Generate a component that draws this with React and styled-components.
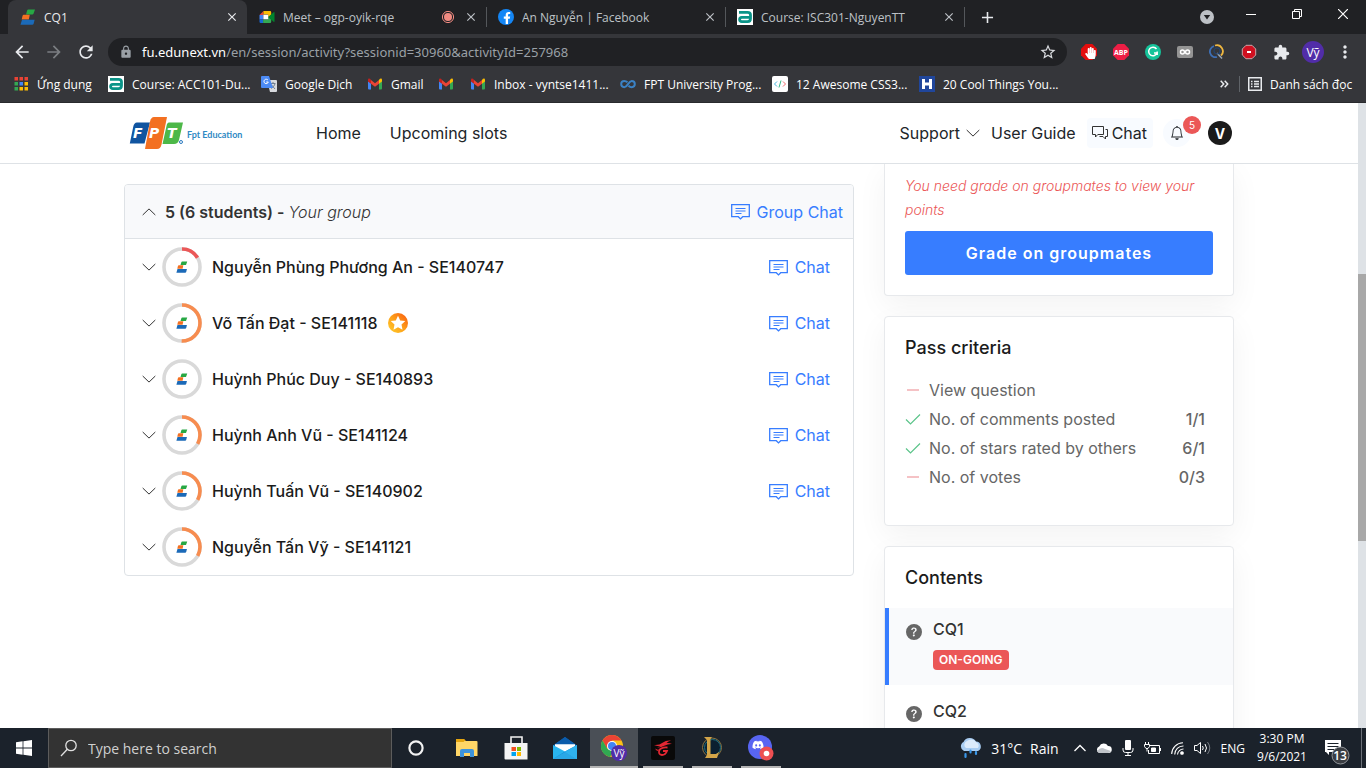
import React from "react";
import styled, { createGlobalStyle } from "styled-components";
import { MdArrowBack, MdArrowForward, MdRefresh, MdLock, MdStarBorder, MdExtension, MdMoreVert, MdClose, MdAdd } from "react-icons/md";
import { BsBell, BsQuestionCircleFill } from "react-icons/bs";
import { FaDiscord, FaFacebookF, FaHandPaper } from "react-icons/fa";

const systemFont = `"Open Sans", "Noto Sans", sans-serif`;
const addressFont = `"Noto Sans", "Open Sans", sans-serif`;
const pageFont = `Inter, "Noto Sans", sans-serif`;

const GlobalStyle = createGlobalStyle`
  * { box-sizing: border-box; }
  body { margin: 0; overflow: hidden; background: #fff; }
  button, input { font: inherit; color: inherit; letter-spacing: inherit; }
  button { border: 0; padding: 0; background: none; cursor: pointer; }
  a { color: inherit; text-decoration: none; }
  svg { display: block; flex: none; }
  h2, p, ul { margin: 0; padding: 0; }
  ul { list-style: none; }
`;

const Desktop = styled.div`
  display: flex;
  flex-direction: column;
  height: 100vh;
  overflow: hidden;
`;

/* ---------- browser chrome ---------- */

const BrowserChrome = styled.header`
  flex: none;
  background: #35363a;
  color: #e8eaed;
  font-family: ${systemFont};
  font-size: 12px;
  border-bottom: 1px solid #292a2d;
`;

const TabStrip = styled.div`
  display: flex;
  height: 34px;
  padding-left: 8px;
  background: #202124;
`;

const Tab = styled.div`
  display: flex;
  align-items: center;
  gap: 8px;
  width: 239px;
  padding: 0 7px 0 12px;
  border-radius: 8px 8px 0 0;
  background: ${(p) => (p.$active ? "#35363a" : "transparent")};
  color: ${(p) => (p.$active ? "#e8eaed" : "#bdc1c6")};
`;

const TabTitle = styled.button`
  flex: 1;
  min-width: 0;
  overflow: hidden;
  text-align: left;
  white-space: nowrap;
`;

const TabRule = styled.span`
  align-self: center;
  width: 1px;
  height: 20px;
  margin-right: -1px;
  background: #54575b;
`;

const IconButton = styled.button`
  display: flex;
  align-items: center;
  justify-content: center;
  width: ${(p) => p.$w || 32}px;
  height: ${(p) => p.$h || 28}px;
  flex: none;
  color: ${(p) => p.$color || "inherit"};
`;

const WindowControls = styled.div`
  display: flex;
  align-items: flex-start;
  margin-left: auto;
  color: #fff;
`;

const Toolbar = styled.div`
  display: flex;
  align-items: center;
  height: 36px;
  padding: 0 5px 0 6px;
`;

const AddressBar = styled.form`
  display: flex;
  align-items: center;
  flex: 1;
  height: 28px;
  margin: 0 6px;
  padding: 0 3px 0 11px;
  border-radius: 14px;
  background: #202124;
  font-family: ${addressFont};
  font-size: 13px;
  color: #9aa0a6;
`;

const Domain = styled.label`
  margin-left: 9px;
  color: #fff;
`;

const AddressInput = styled.input`
  flex: 1;
  min-width: 0;
  padding: 0;
  border: 0;
  outline: 0;
  background: none;
`;

const ProfileButton = styled.button`
  width: 22px;
  height: 22px;
  margin: 0 5px;
  border-radius: 50%;
  background: #512da8;
  color: #fff;
`;

const BookmarkBar = styled.nav`
  display: flex;
  align-items: center;
  height: 32px;
  padding: 0 6px 4px;
`;

const Bookmark = styled.a`
  display: flex;
  align-items: center;
  gap: 8px;
  padding: 0 8px;
  white-space: nowrap;
  color: #fff;
`;

const BookmarkLabel = styled.span`
  width: ${(p) => p.$w}px;
`;

const BookmarkEnd = styled.div`
  display: flex;
  align-items: center;
  margin-left: auto;
`;

const BarRule = styled.span`
  width: 1px;
  height: 16px;
  background: #5f6368;
`;

/* ---------- page ---------- */

const Viewport = styled.div`
  display: flex;
  flex: 1;
  min-height: 0;
  background: #fff;
  color: #212529;
  font-family: ${pageFont};
  font-size: 16px;
`;

const Page = styled.div`
  display: flex;
  flex-direction: column;
  flex: 1;
  min-width: 0;
  overflow: hidden;
`;

const ScrollTrack = styled.div`
  display: flex;
  flex-direction: column;
  width: 8px;
  background: #dee2e6;
`;

const ScrollSpace = styled.span`
  flex: ${(p) => p.$grow};
`;

const ScrollThumb = styled.span`
  flex: 267;
  background: #a8a8a8;
`;

const SiteHeader = styled.header`
  flex: none;
  border-bottom: 1px solid #dee2e6;
  background: #fff;
  z-index: 1;
`;

const Container = styled.div`
  width: 100%;
  max-width: 1110px;
  margin: 0 auto;
`;

const HeaderInner = styled(Container)`
  display: flex;
  align-items: center;
  height: 60px;
  padding: 0 2px 0 5px;
`;

const MainNav = styled.nav`
  display: flex;
  gap: 29px;
  margin-left: 71px;
`;

const UserNav = styled.nav`
  display: flex;
  align-items: center;
  margin-left: auto;
`;

const SupportButton = styled.button`
  display: flex;
  align-items: center;
  gap: 6px;
  margin-right: 11px;
`;

const HeaderChat = styled.a`
  display: flex;
  align-items: center;
  gap: 4px;
  height: 30px;
  margin: 0 10px 0 11px;
  padding: 0 6px 0 5px;
  border-radius: 4px;
  background: #f8fbff;
`;

const BellButton = styled.button`
  position: relative;
  display: grid;
  place-items: center;
  width: 28px;
  height: 28px;
  margin-right: 17px;
  border-radius: 50%;
  background: #f8fbff;
`;

const BellCount = styled.span`
  position: absolute;
  top: -3px;
  right: -10px;
  width: 18px;
  border-radius: 9px;
  background: #eb5757;
  color: #fff;
  font-size: 10px;
  line-height: 18px;
`;

const Avatar = styled.button`
  width: 24px;
  height: 24px;
  border-radius: 50%;
  background: #1b1b1b;
  color: #fff;
  font-size: 14px;
  font-weight: 700;
`;

const Columns = styled(Container)`
  display: flex;
  align-items: flex-start;
  gap: 30px;
`;

const GroupPanel = styled.section`
  flex: 1;
  margin-top: 20px;
  border: 1px solid #dee2e6;
  border-radius: 4px;
  overflow: hidden;
`;

const GroupHead = styled.div`
  display: flex;
  align-items: center;
  height: 54px;
  padding: 0 10px 0 16px;
  border-bottom: 1px solid #dee2e6;
  background: #f8f9fb;
`;

const ToggleButton = styled.button`
  display: grid;
  place-items: center;
  width: 16px;
  height: 24px;
`;

const GroupTitle = styled.h2`
  margin-left: 8px;
  color: #333;
  font-size: 16px;
  font-weight: 600;

  em { font-weight: 300; }
`;

const StudentRow = styled.li`
  display: flex;
  align-items: center;
  height: 56px;
  padding: 0 23px 0 16px;
`;

const Ring = styled.span`
  display: grid;
  place-items: center;
  width: 40px;
  height: 40px;
  margin: 0 10px 0 5px;

  > svg { grid-area: 1 / 1; }
`;

const StudentName = styled.span`
  margin-right: 10px;
  color: #1b1b1b;
  font-weight: 500;
`;

const ChatLink = styled.a`
  display: flex;
  align-items: center;
  gap: 7px;
  margin-left: auto;
  color: #377dff;
`;

const Sidebar = styled.aside`
  display: flex;
  flex-direction: column;
  gap: 20px;
  width: 350px;
  flex: none;
`;

const Card = styled.section`
  padding: ${(p) => p.$pad || "20px"};
  border: 1px solid #e7e9ec;
  border-top-width: ${(p) => (p.$cut ? 0 : 1)}px;
  border-radius: ${(p) => (p.$cut ? "0 0 4px 4px" : "4px")};
  background: #fff;
  box-shadow: 0 10px 30px rgba(0, 0, 0, 0.05);
`;

const CardTitle = styled.h2`
  padding: 0 ${(p) => p.$inset || 0}px;
  color: #1b1b1b;
  font-size: 18px;
  font-weight: 500;
  line-height: 22px;
`;

const Warning = styled.p`
  margin-bottom: 9px;
  color: #eb5757;
  font-size: 14px;
  font-style: italic;
  font-weight: 300;
  line-height: 24px;
`;

const PrimaryButton = styled.button`
  width: 100%;
  height: 44px;
  border-radius: 3px;
  background: #377dff;
  color: #fff;
  font-weight: 600;
  letter-spacing: 1px;
`;

const CriteriaList = styled.ul`
  margin-top: 16px;
`;

const Criterion = styled.li`
  display: flex;
  align-items: center;
  gap: 8px;
  height: 29px;
  padding-right: 8px;
  color: #666;
`;

const Score = styled.span`
  margin-left: auto;
  font-weight: 500;
`;

const ContentItem = styled.a`
  display: flex;
  gap: 11px;
  height: 77px;
  margin-top: ${(p) => (p.$active ? 19 : 5)}px;
  padding: 11px 17px;
  border-left: 4px solid ${(p) => (p.$active ? "#377dff" : "transparent")};
  background: ${(p) => (p.$active ? "#f9fafc" : "#fff")};
  color: #666;

  > svg { margin-top: 5px; }
`;

const ContentText = styled.span`
  display: flex;
  flex-direction: column;
  align-items: flex-start;
  gap: 11px;
  color: #333;
  font-weight: 500;
  line-height: 20px;
`;

const StatusBadge = styled.span`
  padding: 0 6px;
  border-radius: 4px;
  background: #eb5757;
  color: #fff;
  font-size: 12px;
  font-weight: 600;
`;

/* ---------- taskbar ---------- */

const Taskbar = styled.footer`
  display: flex;
  flex: none;
  height: 40px;
  background: #1b222b;
  color: #fff;
  font-family: ${systemFont};
  font-size: 12px;
`;

const TaskSearch = styled.label`
  display: flex;
  align-items: center;
  gap: 10px;
  width: 344px;
  padding: 0 11px;
  border: 1px solid #5c5c5c;
  background: #333;
`;

const TaskSearchInput = styled.input`
  flex: 1;
  min-width: 0;
  padding: 0;
  border: 0;
  outline: 0;
  background: none;
  font-size: 14px;

  &::placeholder { color: #d0d0d0; opacity: 1; }
`;

const TaskApps = styled.div`
  display: flex;
  gap: 1px;
  margin-left: 3px;
`;

const TaskButton = styled.button`
  display: grid;
  place-items: center;
  width: 48px;
  height: 40px;
  background: ${(p) => (p.$active ? "#4a4f56" : "none")};
`;

const RunningButton = styled(TaskButton)`
  background-image: linear-gradient(#b4b4b4, #b4b4b4);
  background-repeat: no-repeat;
  background-position: bottom;
  background-size: ${(p) => (p.$active ? 48 : 40)}px 2px;
`;

const Tray = styled.div`
  display: flex;
  align-items: center;
  gap: 10px;
  margin-left: auto;
  padding-right: 4px;
`;

const Weather = styled.button`
  display: flex;
  align-items: center;
  gap: 8px;
  margin-right: 5px;
  font-size: 14px;
`;

const Clock = styled.time`
  display: flex;
  flex-direction: column;
  width: 54px;
  line-height: 18px;
  text-align: center;
`;

const Notifications = styled.button`
  width: 27px;
  height: 40px;
  margin-left: 5px;
`;

const ShowDesktop = styled.span`
  width: 1px;
  height: 40px;
  background: #6b7078;
`;

/* ---------- drawings ---------- */

const EduLogo = ({ size = 16 }) => (
  <svg width={size} height={size} viewBox="0 0 16 16">
    <path fill="#27a844" d="M8.400 .5H15l-1.400 4q-.3.9-1.400.9H6l1-3.500Q7.300.5 8.400.5z" />
    <path fill="#f37021" d="M3.800 5.800h6L8.800 10.400H1.700l.8-3.400q.3-1.200 1.300-1.200z" />
    <path fill="#1b6ab8" d="M2 10.800h12.600l-1 3.900q-.3 1.100-1.400 1.100H.5z" />
  </svg>
);

const MeetIcon = () => (
  <svg width="16" height="16" viewBox="0 0 16 16">
    <path fill="#ea4335" d="M4.500 2v4H.5z" />
    <path fill="#fbbc04" d="M4.500 2H11q1.200 0 1.200 1.200V6l-3 2V5.500H4.500z" />
    <path fill="#4285f4" d="M.5 6h3.600v4.500H.5z" />
    <path fill="#1967d2" d="M.5 10.500h3.600V14H1.700Q.5 14 .5 12.800z" />
    <path fill="#34a853" d="M4.100 10.500h5V8l3.100 2.500v2.300Q12.200 14 11 14H4.100z" />
    <path fill="#00832d" d="M9.100 8 14.600 3.300q.9-.5.900.4v8.600q0 .9-.9.4z" />
    <path fill="#fff" d="M4.300 5.700h4.900v4.600H4.300z" />
  </svg>
);

const FacebookIcon = () => (
  <svg width="16" height="16" viewBox="0 0 16 16">
    <circle cx="8" cy="8" r="8" fill="#1486f5" />
    <FaFacebookF x="3" y="3" width="10" height="13" color="#fff" />
  </svg>
);

const CourseIcon = () => (
  <svg width="16" height="16" viewBox="0 0 16 16">
    <path fill="#fff" d="M0 0h16v16H0z" />
    <path fill="none" stroke="#0b9488" strokeWidth="2.800" d="M2 3.400h8.500Q13.500 3.400 13.500 6v3.500Q13.500 12.600 10.500 12.600H4.800Q2.600 12.600 2.600 10.500T4.800 8.300h8" />
  </svg>
);

const RecordIcon = () => (
  <svg width="14" height="14" viewBox="0 0 14 14">
    <circle cx="7" cy="7" r="4" fill="#f28b82" />
    <circle cx="7" cy="7" r="5.600" fill="none" stroke="#f28b82" />
  </svg>
);

const AppsIcon = () => {
  const colors = ["#ea4335", "#ea4335", "#ea4335", "#34a853", "#4285f4", "#fbbc04", "#34a853", "#fbbc04", "#fbbc04"];
  return (
    <svg width="15" height="14" viewBox="0 0 14 14">
      {colors.map((c, i) => <rect key={i} x={(i % 3) * 5} y={Math.floor(i / 3) * 5} width="3.500" height="3.500" fill={c} />)}
    </svg>
  );
};

const TranslateIcon = () => (
  <svg width="16" height="16" viewBox="0 0 16 16">
    <path fill="#d7dade" d="M6 4h9q1 0 1 1v10q0 1-1 1H9z" />
    <path fill="none" stroke="#6f7f90" d="M9.500 7.500h5M12 6v1.500M14 8q-1 3-4 4.500M10.500 9l3.500 4" />
    <path fill="#4c8bf5" d="M1 0h7l4 12H1q-1 0-1-1V1q0-1 1-1z" />
    <path fill="none" stroke="#fff" d="M7 4.200A2.200 2.200 0 1 0 7.300 6H5.200" />
  </svg>
);

const GmailIcon = () => (
  <svg width="16" height="16" viewBox="0 0 16 16">
    <path fill="#4285f4" d="M1 5l3 2.200V13.500H2q-1 0-1-1z" />
    <path fill="#34a853" d="M15 5l-3 2.200v6.300h2q1 0 1-1z" />
    <path fill="#ea4335" d="M4 4l4 3.300L12 4v3.700l-4 3.100-4-3.100z" />
    <path fill="#c5221f" d="M1 4q0-2 2-1.200L4 3.700v4L1 5.600z" />
    <path fill="#fbbc04" d="M15 4q0-2-2-1.200l-1 .9v4l3-2.100z" />
  </svg>
);

const InfinityIcon = () => (
  <svg width="16" height="16" viewBox="0 0 16 16">
    <path fill="none" stroke="#3b82c4" strokeWidth="2" d="M7.500 6.300Q6 5 4.300 5a3 3 0 0 0 0 6.200Q6 11.200 8 8.100T11.700 5a3 3 0 0 1 0 6.200q-1.700 0-3.200-1.500" />
  </svg>
);

const CodeIcon = () => (
  <svg width="16" height="16" viewBox="0 0 16 16" fill="none">
    <rect width="16" height="16" rx="2" fill="#fff" />
    <path stroke="#45b6e0" d="M5 5.500 2.500 8 5 10.500" />
    <path stroke="#37b889" d="M9 4.500 7 11.500" />
    <path stroke="#f06a6a" d="M11 5.500 13.500 8 11 10.500" />
  </svg>
);

const HIcon = () => (
  <svg width="16" height="16" viewBox="0 0 16 16">
    <path fill="#20469b" d="M0 0h16v16H0z" />
    <path stroke="#fff" strokeWidth="3" d="M4.500 3v10M11.500 3v10M4.500 8h7" />
  </svg>
);

const ReadingListIcon = () => (
  <svg width="14" height="14" viewBox="0 0 14 14" fill="none" stroke="#e8eaed">
    <path strokeWidth="1.500" d="M.75.75h12.500v12.500H.75z" />
    <path d="M3 4.500h1.500M6 4.500h5M3 7h1.500M6 7h5M3 9.500h1.500M6 9.500h5" strokeWidth="1.500" />
  </svg>
);

const Octagon = ({ fill, children }) => (
  <svg width="16" height="16" viewBox="0 0 16 16">
    <path fill={fill} d="M4.700 0h6.600L16 4.700v6.600L11.300 16H4.700L0 11.300V4.700z" />
    {children}
  </svg>
);

const GrammarIcon = () => (
  <svg width="16" height="16" viewBox="0 0 16 16">
    <circle cx="8" cy="8" r="8" fill="#15c39a" />
    <path fill="none" stroke="#fff" strokeWidth="1.500" d="M11.500 5A4.300 4.300 0 1 0 12 9H9M12.200 7.500V11" />
  </svg>
);

const LinkBoxIcon = () => (
  <svg width="16" height="16" viewBox="0 0 16 16">
    <rect y="2" width="16" height="12" rx="2" fill="#949494" />
    <path fill="none" stroke="#fff" strokeWidth="1.500" d="M8 8Q6.800 6 5.500 6a2 2 0 0 0 0 4Q6.800 10 8 8t2.500-2a2 2 0 0 1 0 4Q9.200 10 8 8z" />
  </svg>
);

const SearchRingIcon = () => (
  <svg width="16" height="16" viewBox="0 0 16 16" fill="none" strokeWidth="1.800">
    <path stroke="#3d6fb5" d="M5 2.200A5.500 5.500 0 0 0 8 13" />
    <path stroke="#f0b840" d="M6 1.500A6 6 0 0 1 12 11.500" />
    <path stroke="#9aa7b5" strokeWidth="1.500" d="M8 9l5 5.500" />
    <circle cx="8" cy="7" r="3" stroke="#23446f" strokeWidth="1.200" />
  </svg>
);

const RedDotIcon = () => (
  <svg width="16" height="16" viewBox="0 0 16 16">
    <path fill="#cf1020" stroke="#c9a6a9" d="M5 1.300h6L14.700 5v6L11 14.700H5L1.300 11V5z" />
    <rect x="6" y="7" width="4" height="2" fill="#fff" />
  </svg>
);

const FptLogo = () => (
  <svg width="116" height="36" viewBox="0 0 116 36" role="img" aria-label="FPT Education">
    <path fill="#1054a0" d="M8 7.500h13L15.500 28.500H.8L4.200 12Q5 7.500 8 7.500z" />
    <path fill="#f37021" d="M25 2h13l-5.500 27.500Q31.500 34 28 34H16l5-27.500Q22 2 25 2z" />
    <path fill="#4db848" d="M40 7.500h14L50 25Q49 29 45 29H33.500l4-18Q38 7.500 40 7.500z" />
    <g fill="#fff" fontFamily={`"DejaVu Sans", sans-serif`} fontSize="14" fontWeight="700" fontStyle="italic">
      <text x="4" y="23">F</text>
      <text x="20" y="23">P</text>
      <text x="38" y="23">T</text>
    </g>
    <circle cx="52" cy="27" r="1.500" fill="none" stroke="#2b7ac0" />
    <text x="58" y="23" fill="#2f8ac4" fontFamily="Lato, sans-serif" fontSize="9" fontWeight="700">Fpt Education</text>
  </svg>
);

const Chevron = ({ up }) => (
  <svg width="14" height="8" viewBox="0 0 14 8">
    <path fill="none" stroke="#333" d={up ? "M.7 7 7 .9 13.300 7" : "M.7 1 7 7.100 13.300 1"} />
  </svg>
);

const HeaderChatIcon = () => (
  <svg width="16" height="16" viewBox="0 0 16 16" fill="none" stroke="#333">
    <path d="M.5 1.500h11v8H5.800L3.500 12V9.500h-3zM13.500 4.500h2v7h-2V14l-2.500-2.500H7.500" />
  </svg>
);

const ChatIcon = () => (
  <svg width="19" height="17" viewBox="0 0 19 17" fill="none" stroke="#377dff">
    <path strokeWidth="1.300" d="M.7 1.700h17.600v12h-6.600l-2.200 2.200-2.200-2.200H.7z" />
    <path d="M4.500 5.500h10M4.500 8h10M4.500 10.500h6" />
  </svg>
);

const StarMedal = () => (
  <svg width="20" height="20" viewBox="0 0 20 20">
    <defs>
      <linearGradient id="medal" x1="0" y1="1" x2="1" y2="0">
        <stop offset="0" stopColor="#ffd02c" />
        <stop offset=".5" stopColor="#fd9f1a" />
        <stop offset="1" stopColor="#f9560e" />
      </linearGradient>
    </defs>
    <circle cx="10" cy="10" r="10" fill="url(#medal)" />
    <path fill="#fff" d="m10 2.800 2.200 4.700 5.100.6-3.800 3.500 1 5.100-4.500-2.500-4.500 2.500 1-5.100L2.700 8.100l5.100-.6z" />
  </svg>
);

const ProgressRing = ({ value, color }) => {
  const length = 2 * Math.PI * 18;
  return (
    <Ring>
      <svg width="40" height="40" viewBox="0 0 40 40" fill="none" strokeWidth="3.600">
        <circle cx="20" cy="20" r="18" stroke="#d9d9d9" />
        {value > 0 && (
          <circle cx="20" cy="20" r="18" stroke={color} strokeDasharray={`${length * value} ${length}`} transform="rotate(-90 20 20)" />
        )}
      </svg>
      <EduLogo size={12} />
    </Ring>
  );
};

const DashIcon = () => (
  <svg width="16" height="16" viewBox="0 0 16 16"><path stroke="#f5c2c5" strokeWidth="2" d="M2 8h12" /></svg>
);

const TickIcon = () => (
  <svg width="16" height="16" viewBox="0 0 16 16"><path fill="none" stroke="#5cc48a" strokeWidth="1.200" d="m1 8.500 4.500 4.500L15 3.500" /></svg>
);

const WindowsIcon = () => (
  <svg width="16" height="16" viewBox="0 0 16 16" fill="#fff">
    <path d="M0 2.200 6.600 1.300v6.300H0zM7.400 1.200 16 0v7.600H7.400zM0 8.400h6.600v6.300L0 13.800zM7.400 8.400H16V16l-8.600-1.200z" />
  </svg>
);

const MagnifierIcon = () => (
  <svg width="18" height="18" viewBox="0 0 18 18" fill="none" stroke="#e0e0e0" strokeWidth="1.300">
    <circle cx="11" cy="6.500" r="5.200" /><path d="M7.300 10.300 1 17" />
  </svg>
);

const CortanaIcon = () => (
  <svg width="18" height="18" viewBox="0 0 18 18"><circle cx="9" cy="9" r="6.600" fill="none" stroke="#f2f2f2" strokeWidth="2.200" /></svg>
);

const FolderIcon = () => (
  <svg width="22" height="20" viewBox="0 0 22 20">
    <path fill="#e5a50f" d="M0 1h8l2 2v4H0z" />
    <path fill="#ffd667" d="M1 3h19.500q1 0 1 1v14H0V4z" />
    <path fill="#e5a50f" d="M0 1h8l1 1.500L7.500 4H0z" />
    <path fill="#3d93db" d="M4 19v-6q0-2 2-2h10q2 0 2 2v6h-4v-4H8v4z" />
  </svg>
);

const StoreIcon = () => (
  <svg width="24" height="24" viewBox="0 0 24 24">
    <path fill="none" stroke="#f2f2f2" strokeWidth="1.600" d="M7 7V1h11v6" />
    <path fill="#f4f4f4" d="M.5 7h23v16.500H1.500q-1 0-1-1z" />
    <path fill="#f25022" d="M7.500 11H12v4H7.500z" /><path fill="#7fba00" d="M13 11h4v4h-4z" />
    <path fill="#00a4ef" d="M7.500 16H12v4H7.500z" /><path fill="#ffb900" d="M13 16h4v4h-4z" />
  </svg>
);

const MailIcon = () => (
  <svg width="24" height="22" viewBox="0 0 24 22">
    <path fill="#0b5cab" d="M0 8.500 12 0l12 8.500V13H0z" />
    <path fill="#fff" d="M2 7h20v5l-10 6L2 12z" />
    <path fill="#0b5cab" d="M0 8.500 12 0l12 8.500-2-1.300H2z" />
    <path fill="#29b5ef" d="M0 8 12 14.500 24 8v14H0z" />
    <path fill="#1386d6" d="M0 22h24L12 14.500z" />
    <path fill="#1f9de6" d="M24 8v14L12 14.500z" />
    <path fill="#40c8f5" d="M0 22 24 8v14z" opacity=".5" />
  </svg>
);

const ChromeIcon = () => (
  <svg width="26" height="26" viewBox="0 0 26 26">
    <circle cx="11" cy="11" r="11" fill="#fbc116" />
    <path fill="#ea4335" d="M1.500 5.500a11 11 0 0 1 19 0H11l-5 8z" />
    <path fill="#30a852" d="M1.500 5.500 6.300 13.700 12 16l-3 6A11 11 0 0 1 1.500 5.500z" />
    <circle cx="11" cy="11" r="5" fill="#fff" /><circle cx="11" cy="11" r="4" fill="#4285f4" />
    <circle cx="18" cy="18" r="8" fill="#512da8" />
    <text x="18" y="22" textAnchor="middle" fill="#fff" fontSize="10">Vỹ</text>
  </svg>
);

const GarenaIcon = () => (
  <svg width="24" height="24" viewBox="0 0 24 24">
    <rect width="24" height="24" rx="2" fill="#090909" />
    <path fill="#e32733" d="M3 9q5 .5 9-2.500Q15 4 20 4.500 17 5 15.500 7 18 6.500 21 8q-4-.3-7 1.500-5 2.500-8 2Q8 11 9.500 10 6 10.500 3 9z" />
    <path fill="none" stroke="#e32733" strokeWidth="1.800" d="M16.500 11.500Q10 11 8.200 14.500 7 18.500 11 19q3.500 0 5-4h-4" />
    <path fill="#e32733" d="M4 12.500q2 1.500 4 1l-1 1.500q-2-.2-3-2.500z" />
  </svg>
);

const LeagueIcon = () => (
  <svg width="24" height="24" viewBox="0 0 24 24">
    <circle cx="12" cy="11.500" r="9.500" fill="#0b1f30" stroke="#8d7440" strokeWidth="1" />
    <circle cx="12.500" cy="11.500" r="8" fill="none" stroke="#1d6f80" strokeWidth="1" />
    <path fill="#d3a549" d="M4 1h8l-1.500 2v15H16l3-2-2 6H5l2-3V4z" />
  </svg>
);

const DiscordIcon = () => (
  <svg width="26" height="26" viewBox="0 0 26 26">
    <circle cx="12" cy="12" r="12" fill="#5865f2" />
    <FaDiscord x="4" y="4" width="16" height="16" color="#fff" />
    <circle cx="18.500" cy="18.500" r="7" fill="#ed4f52" /><circle cx="18.500" cy="18.500" r="2.800" fill="#fff" />
  </svg>
);

const RainIcon = () => (
  <svg width="24" height="22" viewBox="0 0 24 22">
    <path fill="#a9cdf2" d="M5 14a5 5 0 0 1-.5-9A7 7 0 0 1 17 4.500a5 5 0 0 1 2 9.500z" />
    <path fill="#dcebfb" d="M7 11a4 4 0 0 1 1-7 6 6 0 0 1 9 1 4 4 0 0 1 2 6z" />
    <path stroke="#3a97e8" strokeWidth="2.200" strokeLinecap="round" d="M6.500 17v3M11.500 13.500v2M17 15v2" />
  </svg>
);

const CloudIcon = () => (
  <svg width="16" height="12" viewBox="0 0 16 12">
    <path fill="#fff" d="M3.500 11a3.400 3.400 0 0 1-.3-6.500A5 5 0 0 1 12 4a3.500 3.500 0 0 1 .5 7z" />
    <path fill="#bfc3c8" d="M1 9q4-5 8-2l6 2q-1 2-3 2H3.500Q2 11 1 9z" />
  </svg>
);

const MicIcon = () => (
  <svg width="12" height="16" viewBox="0 0 12 16">
    <rect x="3" y="0" width="6" height="10" rx="1" fill="#fff" />
    <path fill="none" stroke="#fff" d="M1 8v2q0 2.500 2.500 2.500h5Q11 12.500 11 10V8M6 12.500v3M3 15.500h6" />
  </svg>
);

const BatteryIcon = () => (
  <svg width="17" height="13" viewBox="0 0 17 13" fill="none" stroke="#fff">
    <path d="M6 3.500h9.500v8h-11V8M16.500 6v3M1.500 0v2M4.500 0v2M.5 2.500h5v2l-1.500 2H2L.5 4.500zM3 6.500v3" />
    <path fill="#fff" d="M7.500 6h4v3.500h-4z" />
  </svg>
);

const WifiIcon = () => (
  <svg width="13" height="13" viewBox="0 0 13 13" fill="none" stroke="#fff" strokeWidth="1.100">
    <path d="M.7 12A11.500 11.500 0 0 1 12 .7M3.700 12.500A8.500 8.500 0 0 1 12.500 4M6.500 12.500a6 6 0 0 1 6-5.500" /><circle cx="11" cy="11" r="1.300" fill="#fff" />
  </svg>
);

const SpeakerIcon = () => (
  <svg width="17" height="14" viewBox="0 0 17 14" fill="none" stroke="#fff">
    <path d="M.5 4.500h2.500l3.500-3v11L3 9.500H.5zM8.500 5q1.500 2 0 4" />
    <path d="M11 3q3 4 0 8" /><path stroke="#777c84" d="M13.500 1q4.500 6 0 12" />
  </svg>
);

const NoticeIcon = () => (
  <svg width="27" height="40" viewBox="0 0 27 40">
    <path fill="#fff" d="M1 12h16v12H5v3l-3-3H1z" />
    <path stroke="#1b222b" d="M3.500 15.500h11M3.500 18.500h11M3.500 21.500h7" />
    <circle cx="16.500" cy="27.500" r="8.500" fill="#3a3d42" stroke="#91959a" />
    <text x="16" y="32" textAnchor="middle" fill="#fff" fontSize="12" fontWeight="600">13</text>
  </svg>
);

/* ---------- data ---------- */

const tabs = [
  { title: "CQ1", icon: <EduLogo />, active: true },
  { title: "Meet – ogp-oyik-rqe", icon: <MeetIcon />, recording: true },
  { title: "An Nguyễn | Facebook", icon: <FacebookIcon /> },
  { title: "Course: ISC301-NguyenTT", icon: <CourseIcon /> },
];

const bookmarks = [
  { label: "Ứng dụng", icon: <AppsIcon />, width: 55 },
  { label: "Course: ACC101-Du...", icon: <CourseIcon />, width: 113 },
  { label: "Google Dịch", icon: <TranslateIcon />, width: 66 },
  { label: "Gmail", icon: <GmailIcon />, width: 31 },
  { icon: <GmailIcon /> },
  { label: "Inbox - vyntse1411...", icon: <GmailIcon />, width: 110 },
  { label: "FPT University Prog...", icon: <InfinityIcon />, width: 112 },
  { label: "12 Awesome CSS3...", icon: <CodeIcon />, width: 107 },
  { label: "20 Cool Things You...", icon: <HIcon />, width: 111 },
];

const students = [
  { name: "Nguyễn Phùng Phương An - SE140747", value: 0.163, color: "#eb5757", chat: true },
  { name: "Võ Tấn Đạt - SE141118", value: 0.5, color: "#f78c4f", chat: true, star: true },
  { name: "Huỳnh Phúc Duy - SE140893", value: 0, chat: true },
  { name: "Huỳnh Anh Vũ - SE141124", value: 0.33, color: "#f78c4f", chat: true },
  { name: "Huỳnh Tuấn Vũ - SE140902", value: 0.33, color: "#f78c4f", chat: true },
  { name: "Nguyễn Tấn Vỹ - SE141121", value: 0.33, color: "#f78c4f" },
];

const criteria = [
  { label: "View question" },
  { label: "No. of comments posted", score: "1/1", done: true },
  { label: "No. of stars rated by others", score: "6/1", done: true },
  { label: "No. of votes", score: "0/3" },
];

export default function App() {
  return (
    <Desktop>
      <GlobalStyle />
      <BrowserChrome>
        <TabStrip>
          {tabs.map((tab, i) => (
            <React.Fragment key={tab.title}>
              <Tab $active={tab.active}>
                {tab.icon}
                <TabTitle>{tab.title}</TabTitle>
                {tab.recording && <RecordIcon />}
                <IconButton $w={16} $h={16} aria-label="Close tab"><MdClose size={14} /></IconButton>
              </Tab>
              {i > 0 && <TabRule />}
            </React.Fragment>
          ))}
          <IconButton $w={46} $h={34} aria-label="New tab"><MdAdd size={19} /></IconButton>
          <WindowControls>
            <IconButton $w={42} $h={34} aria-label="Tab search">
              <svg width="14" height="14" viewBox="0 0 14 14"><circle cx="7" cy="7" r="7" fill="#bdc1c6" /><path fill="#202124" d="M3.800 5h6.400L7 9.500z" /></svg>
            </IconButton>
            <IconButton $w={46} aria-label="Minimize">
              <svg width="10" height="10" viewBox="0 0 10 10"><path stroke="#fff" d="M0 5.500h10" /></svg>
            </IconButton>
            <IconButton $w={46} aria-label="Restore">
              <svg width="10" height="10" viewBox="0 0 10 10" fill="none" stroke="#fff"><path d="M.5 2.500h7v7h-7zM2.500 2.500v-2h7v7h-2" /></svg>
            </IconButton>
            <IconButton $w={46} aria-label="Close">
              <svg width="10" height="10" viewBox="0 0 10 10"><path stroke="#fff" strokeWidth="1.200" d="M0 0l10 10M10 0 0 10" /></svg>
            </IconButton>
          </WindowControls>
        </TabStrip>

        <Toolbar>
          <IconButton aria-label="Back"><MdArrowBack size={20} /></IconButton>
          <IconButton aria-label="Forward" $color="#7b7e82"><MdArrowForward size={20} /></IconButton>
          <IconButton aria-label="Reload"><MdRefresh size={20} /></IconButton>
          <AddressBar>
            <MdLock size={14} />
            <Domain htmlFor="address">fu.edunext.vn</Domain>
            <AddressInput id="address" defaultValue="/en/session/activity?sessionid=30960&activityId=257968" />
            <IconButton type="button" aria-label="Bookmark this page" $color="#dadce0"><MdStarBorder size={18} /></IconButton>
          </AddressBar>
          <IconButton aria-label="Content blocker">
            <Octagon fill="#e40d0d"><FaHandPaper x="3.500" y="3" width="9" height="10" color="#fff" /></Octagon>
          </IconButton>
          <IconButton aria-label="Adblock Plus">
            <Octagon fill="#ed1e45"><text x="8" y="11" textAnchor="middle" fill="#fff" fontSize="7" fontWeight="700">ABP</text></Octagon>
          </IconButton>
          <IconButton aria-label="Grammar checker"><GrammarIcon /></IconButton>
          <IconButton aria-label="Link tool"><LinkBoxIcon /></IconButton>
          <IconButton aria-label="Search tool"><SearchRingIcon /></IconButton>
          <IconButton aria-label="Recorder"><RedDotIcon /></IconButton>
          <IconButton aria-label="Extensions"><MdExtension size={17} /></IconButton>
          <ProfileButton>Vỹ</ProfileButton>
          <IconButton aria-label="Menu"><MdMoreVert size={20} /></IconButton>
        </Toolbar>

        <BookmarkBar>
          {bookmarks.map((b, i) => (
            <Bookmark key={i} href="#" aria-label={b.label || "Gmail inbox"}>
              {b.icon}
              {b.label && <BookmarkLabel $w={b.width}>{b.label}</BookmarkLabel>}
            </Bookmark>
          ))}
          <BookmarkEnd>
            <IconButton $w={30} aria-label="More bookmarks">
              <svg width="9" height="8" viewBox="0 0 9 8" fill="none" stroke="#e8eaed" strokeWidth="1.500"><path d="m.7.700 3 3.300-3 3.300M4.700.700l3 3.300-3 3.300" /></svg>
            </IconButton>
            <BarRule />
            <Bookmark as="button"><ReadingListIcon /><BookmarkLabel $w={82}>Danh sách đọc</BookmarkLabel></Bookmark>
          </BookmarkEnd>
        </BookmarkBar>
      </BrowserChrome>

      <Viewport>
        <Page>
          <SiteHeader>
            <HeaderInner>
              <a href="#"><FptLogo /></a>
              <MainNav>
                <a href="#">Home</a>
                <a href="#">Upcoming slots</a>
              </MainNav>
              <UserNav>
                <SupportButton>Support <Chevron /></SupportButton>
                <a href="#">User Guide</a>
                <HeaderChat href="#"><HeaderChatIcon />Chat</HeaderChat>
                <BellButton aria-label="Notifications"><BsBell size={14} /><BellCount>5</BellCount></BellButton>
                <Avatar>V</Avatar>
              </UserNav>
            </HeaderInner>
          </SiteHeader>

          <Columns as="main">
            <GroupPanel>
              <GroupHead>
                <ToggleButton aria-label="Collapse group"><Chevron up /></ToggleButton>
                <GroupTitle>5 (6 students) - <em>Your group</em></GroupTitle>
                <ChatLink href="#"><ChatIcon />Group Chat</ChatLink>
              </GroupHead>
              <ul>
                {students.map((s) => (
                  <StudentRow key={s.name}>
                    <ToggleButton aria-label="Expand student"><Chevron /></ToggleButton>
                    <ProgressRing value={s.value} color={s.color} />
                    <StudentName>{s.name}</StudentName>
                    {s.star && <StarMedal />}
                    {s.chat && <ChatLink href="#"><ChatIcon />Chat</ChatLink>}
                  </StudentRow>
                ))}
              </ul>
            </GroupPanel>

            <Sidebar>
              <Card $cut $pad="10px 20px 20px">
                <Warning>You need grade on groupmates to view your points</Warning>
                <PrimaryButton>Grade on groupmates</PrimaryButton>
              </Card>
              <Card $pad="20px 20px 34px">
                <CardTitle>Pass criteria</CardTitle>
                <CriteriaList>
                  {criteria.map((c) => (
                    <Criterion key={c.label}>
                      {c.done ? <TickIcon /> : <DashIcon />}
                      <span>{c.label}</span>
                      {c.score && <Score>{c.score}</Score>}
                    </Criterion>
                  ))}
                </CriteriaList>
              </Card>
              <Card $pad="20px 0">
                <CardTitle $inset={20}>Contents</CardTitle>
                <ContentItem href="#" $active>
                  <BsQuestionCircleFill size={16} />
                  <ContentText>CQ1<StatusBadge>ON-GOING</StatusBadge></ContentText>
                </ContentItem>
                <ContentItem href="#">
                  <BsQuestionCircleFill size={16} />
                  <ContentText>CQ2</ContentText>
                </ContentItem>
              </Card>
            </Sidebar>
          </Columns>
        </Page>
        <ScrollTrack>
          <ScrollSpace $grow={171} />
          <ScrollThumb />
          <ScrollSpace $grow={187} />
        </ScrollTrack>
      </Viewport>

      <Taskbar>
        <TaskButton aria-label="Start"><WindowsIcon /></TaskButton>
        <TaskSearch>
          <MagnifierIcon />
          <TaskSearchInput aria-label="Search" placeholder="Type here to search" />
        </TaskSearch>
        <TaskButton aria-label="Cortana"><CortanaIcon /></TaskButton>
        <TaskApps>
          <TaskButton aria-label="File Explorer"><FolderIcon /></TaskButton>
          <TaskButton aria-label="Store"><StoreIcon /></TaskButton>
          <TaskButton aria-label="Mail"><MailIcon /></TaskButton>
          <RunningButton $active aria-label="Chrome"><ChromeIcon /></RunningButton>
          <RunningButton aria-label="Garena"><GarenaIcon /></RunningButton>
          <RunningButton aria-label="League of Legends"><LeagueIcon /></RunningButton>
          <RunningButton aria-label="Discord"><DiscordIcon /></RunningButton>
        </TaskApps>
        <Tray>
          <Weather><RainIcon /><span>31°C</span><span>Rain</span></Weather>
          <svg width="12" height="8" viewBox="0 0 12 8"><path fill="none" stroke="#fff" strokeWidth="1.300" d="m.5 7L6 1.500 11.500 7" /></svg>
          <CloudIcon />
          <MicIcon />
          <BatteryIcon />
          <WifiIcon />
          <SpeakerIcon />
          <span>ENG</span>
          <Clock><span>3:30 PM</span><span>9/6/2021</span></Clock>
          <Notifications aria-label="13 notifications"><NoticeIcon /></Notifications>
          <ShowDesktop />
        </Tray>
      </Taskbar>
    </Desktop>
  );
}
